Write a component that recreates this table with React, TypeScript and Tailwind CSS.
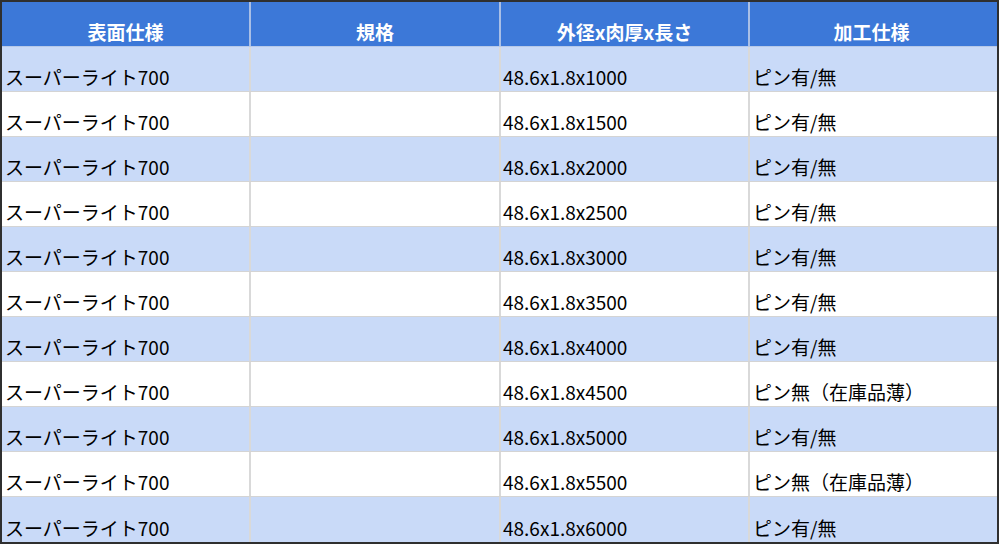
const rows: [string, string][] = [
  ["48.6x1.8x1000", "ピン有/無"],
  ["48.6x1.8x1500", "ピン有/無"],
  ["48.6x1.8x2000", "ピン有/無"],
  ["48.6x1.8x2500", "ピン有/無"],
  ["48.6x1.8x3000", "ピン有/無"],
  ["48.6x1.8x3500", "ピン有/無"],
  ["48.6x1.8x4000", "ピン有/無"],
  ["48.6x1.8x4500", "ピン無（在庫品薄）"],
  ["48.6x1.8x5000", "ピン有/無"],
  ["48.6x1.8x5500", "ピン無（在庫品薄）"],
  ["48.6x1.8x6000", "ピン有/無"],
];

const headers = ["表面仕様", "規格", "外径x肉厚x長さ", "加工仕様"];

export default function App() {
  return (
    <div className="w-[1000px] h-[555px] bg-white" style={{ fontFamily: '"Noto Sans CJK JP", "Noto Sans", sans-serif' }}>
      <div className="w-[999px] border-2 border-[#2f2f2f]">
        <div className="grid grid-cols-[249px_250px_249px_243px] h-[45px] bg-[#3c78d8] border-b border-[#b7c9e8]">
          {headers.map((h, i) => (
            <div
              key={h}
              className={`flex items-end justify-center pb-[1px] text-white font-bold text-[19px] leading-[26px] ${i < 3 ? "border-r-2 border-[#a9bfe6]" : ""}`}
            >
              {h}
            </div>
          ))}
        </div>
        {rows.map(([size, spec], r) => (
          <div
            key={size}
            className={`grid grid-cols-[249px_250px_249px_243px] h-[45px] text-[19px] leading-[26px] text-black ${r < rows.length - 1 ? "border-b border-[#d4d4d4]" : ""} ${r % 2 === 0 ? "bg-[#c9daf8]" : "bg-white"}`}
          >
            <div className="flex items-end pl-[3px] pb-[1px] border-r-2 border-[#d9d9d9]">スーパーライト700</div>
            <div className="border-r-2 border-[#d9d9d9]" />
            <div className="flex items-end pl-[2px] pb-[1px] border-r-2 border-[#d9d9d9]">{size}</div>
            <div className="flex items-end pl-[3px] pb-[1px]">{spec}</div>
          </div>
        ))}
      </div>
    </div>
  );
}
